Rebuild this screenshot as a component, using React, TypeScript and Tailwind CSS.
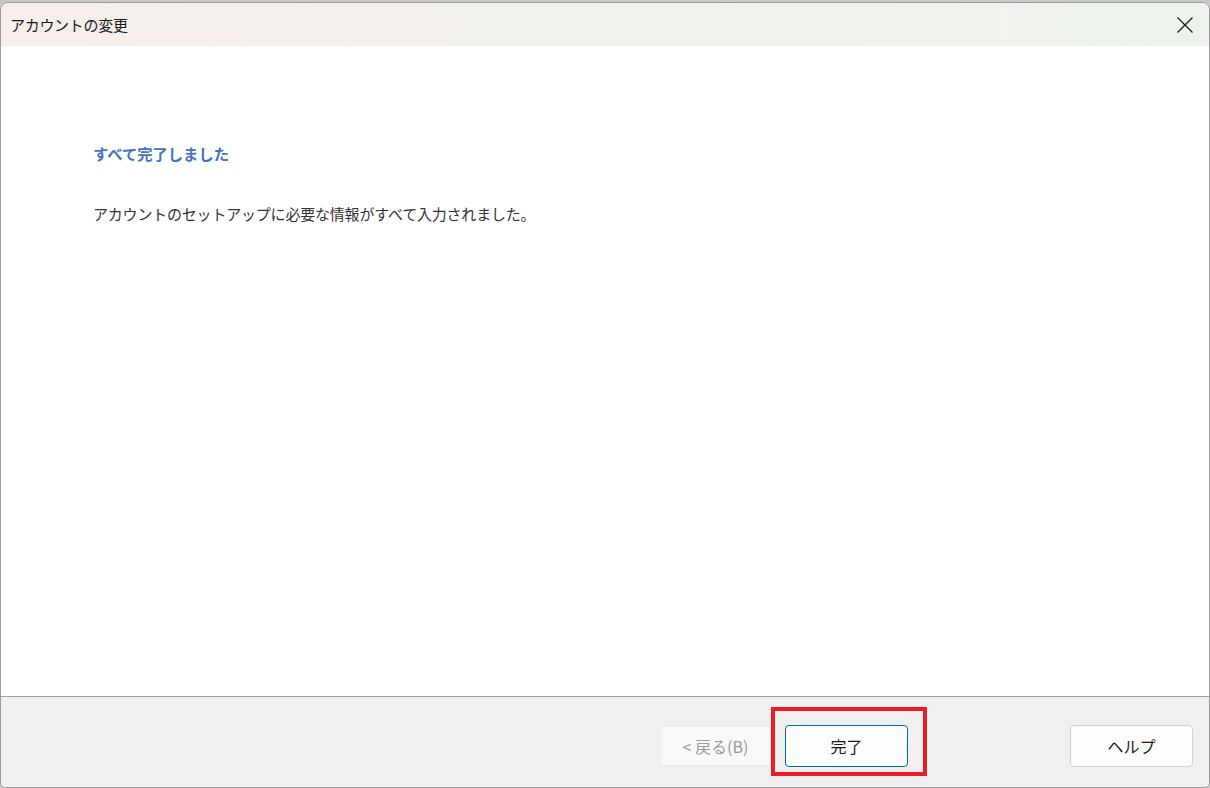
import React from 'react';

const font = "font-['Noto_Sans_CJK_JP','Noto_Sans',sans-serif]";

const App: React.FC = () => {
  return (
    <div className={`relative h-[788px] w-[1210px] overflow-hidden bg-[#c8c8c8] pt-[2px] ${font}`}>
      <div className="flex h-[786px] flex-col overflow-hidden rounded-t-[8px] rounded-b-[6px] border border-[#9c9c9c] bg-white">
        {/* title bar */}
        <div className="flex h-[43px] shrink-0 items-center justify-between bg-gradient-to-r from-[#f6efec] to-[#eef3ee] pl-[9px] pr-[15px]">
          <span className="text-[15px] leading-none text-[#1a1a1a] tracking-[-0.3px]">アカウントの変更</span>
          <svg width="18" height="18" viewBox="0 0 18 18" className="text-[#1a1a1a]">
            <path d="M1.5 1.5 L16.5 16.5 M16.5 1.5 L1.5 16.5" stroke="currentColor" strokeWidth="1.3" fill="none" />
          </svg>
        </div>

        {/* content */}
        <div className="flex-1 pl-[92px] pt-[100px]">
          <h1 className="text-[15.3px] font-bold leading-none text-[#4472c4]">すべて完了しました</h1>
          <p className="mt-[45px] text-[15px] leading-none text-[#333333] tracking-[-0.2px]">
            アカウントのセットアップに必要な情報がすべて入力されました。
          </p>
        </div>

        {/* footer */}
        <div className="flex h-[91px] shrink-0 items-start justify-end border-t border-[#a0a0a0] bg-[#f0f0f0] pr-[16px] pt-[28px]">
          <button className="mt-[1px] h-[40px] w-[111px] rounded-[4px] border border-[#ececec] bg-[#f9f9f9] text-[16px] text-[#9b9b9b]">
            &lt;&nbsp;戻る(B)
          </button>
          <button className="ml-[14px] h-[42px] w-[123px] rounded-[4px] border border-[#0067c0] bg-[#fdfdfd] text-[16px] text-[#1a1a1a]">
            完了
          </button>
          <button className="ml-[162px] h-[42px] w-[123px] rounded-[4px] border border-[#d1d1d1] bg-[#fdfdfd] text-[16px] text-[#1a1a1a]">
            ヘルプ
          </button>
        </div>
      </div>

      {/* red highlight */}
      <div className="pointer-events-none absolute left-[771px] top-[707px] h-[69px] w-[156px] border-[4px] border-[#ed1c24]" />
    </div>
  );
};

export default App;
